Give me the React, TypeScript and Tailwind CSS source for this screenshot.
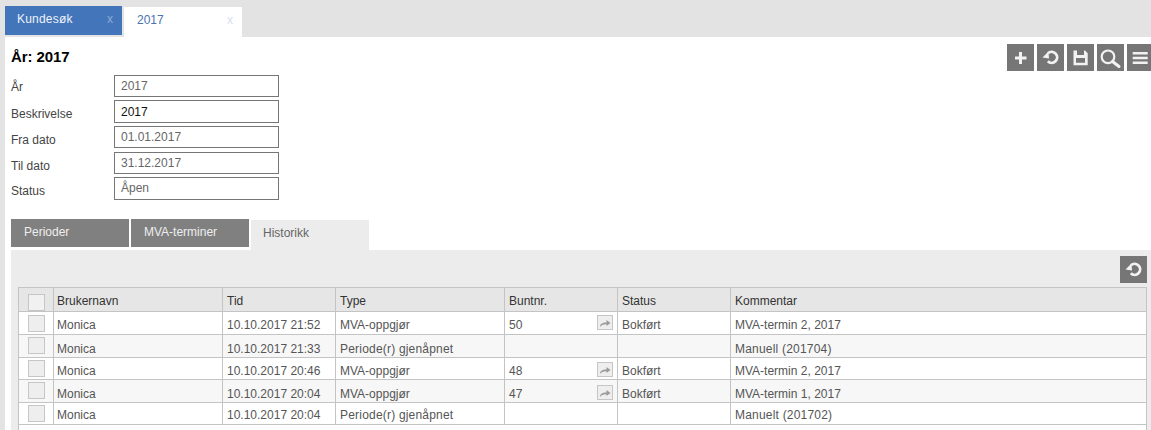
const fields = [
  { label: "År", value: "2017", h: "h-[22px]", mb: "mb-[3px]", labelPad: "pt-[2px]", valuePad: "pb-[1px]", dark: false },
  { label: "Beskrivelse", value: "2017", h: "h-[23px]", mb: "mb-[3px]", labelPad: "pt-[4px]", valuePad: "pb-0", dark: true },
  { label: "Fra dato", value: "01.01.2017", h: "h-[22px]", mb: "mb-[4px]", labelPad: "pt-[5px]", valuePad: "pb-0", dark: false },
  { label: "Til dato", value: "31.12.2017", h: "h-[22px]", mb: "mb-[3px]", labelPad: "pt-[5px]", valuePad: "pb-0", dark: false },
  { label: "Status", value: "Åpen", h: "h-[23px]", mb: "", labelPad: "pt-[4px]", valuePad: "pb-[1px]", dark: false },
];

const rows = [
  { tid: "10.10.2017 21:52", type: "MVA-oppgjør", bunt: "50", status: "Bokført", kommentar: "MVA-termin 2, 2017", h: "h-[23px]", bg: "bg-white", pad: "pt-[4px]", chk: "mt-[3px]", btn: "mt-[-1px]" },
  { tid: "10.10.2017 21:33", type: "Periode(r) gjenåpnet", bunt: "", status: "", kommentar: "Manuell (201704)", h: "h-[23px]", bg: "bg-[#f7f7f7]", pad: "pt-[5px]", chk: "mt-[2px]", btn: "" },
  { tid: "10.10.2017 20:46", type: "MVA-oppgjør", bunt: "48", status: "Bokført", kommentar: "MVA-termin 2, 2017", h: "h-[22px]", bg: "bg-white", pad: "pt-[4px]", chk: "mt-[2px]", btn: "mt-[1px]" },
  { tid: "10.10.2017 20:04", type: "MVA-oppgjør", bunt: "47", status: "Bokført", kommentar: "MVA-termin 1, 2017", h: "h-[23px]", bg: "bg-[#f7f7f7]", pad: "pt-[5px]", chk: "mt-[2px]", btn: "mt-[1px]" },
  { tid: "10.10.2017 20:04", type: "Periode(r) gjenåpnet", bunt: "", status: "", kommentar: "Manuelt (201702)", h: "h-[22px]", bg: "bg-white", pad: "pt-[3px]", chk: "mt-[2px]", btn: "" },
];

const cols = "grid grid-cols-[34px_169px_113px_169px_113px_113px_1fr]";

function IconButton({ children, narrow }: { children: React.ReactNode; narrow?: boolean }) {
  return (
    <div className={`h-[27px] shrink-0 overflow-hidden bg-[#767676] ${narrow ? "w-[24px]" : "w-[27px]"}`}>
      <svg width="27" height="27" viewBox="0 0 27 27" fill="#f2f2f2">
        {children}
      </svg>
    </div>
  );
}

function RefreshIcon() {
  return (
    <>
      <path d="M11 9.200A5.500 5.500 0 1 1 10.800 17.300" fill="none" stroke="#f2f2f2" strokeWidth="2.800" />
      <path d="M5.500 13.400 11.500 7.500 12 14.500Z" />
    </>
  );
}

function Cell({ children, first, className = "" }: { children?: React.ReactNode; first?: boolean; className?: string }) {
  return (
    <div className={`flex h-full items-center border-l border-[#c4c4c4] ${first ? "pl-[3px]" : "pl-[4px]"} ${className}`}>
      {children}
    </div>
  );
}

function Check({ className = "" }: { className?: string }) {
  return (
    <div className="pl-[9px]">
      <div className={`h-[17px] w-[17px] border border-[#c6c6c6] bg-[#eeeeee] ${className}`} />
    </div>
  );
}

export default function App() {
  return (
    <div className="h-[430px] w-[1151px] overflow-hidden bg-[#e3e3e3] font-['Liberation_Sans',Arial,sans-serif] text-[12px] text-[#555]">
      <div className="flex h-[37px] items-start gap-[2px] pl-[5px] pt-[6px]">
        <div className="flex h-[29px] w-[117px] items-center justify-between bg-[#4375bb] pb-[3px] pl-[12px] pr-[9px] text-[#eef2f9]">
          <span className="tracking-[0.2px]">Kundesøk</span>
          <span className="text-[#8fabd6]">x</span>
        </div>
        <div className="mt-px flex h-[30px] w-[118px] items-center justify-between bg-white pb-[5px] pl-[13px] pr-[9px] text-[#4a74b0]">
          <span>2017</span>
          <span className="text-[#d5deee]">x</span>
        </div>
      </div>

      <div className="ml-[5px] h-[393px] bg-white">
        <div className="flex h-[38px] justify-between pl-[6px] pt-[7px]">
          <h1 className="pt-[5px] text-[15px] leading-[16px] font-bold tracking-[-0.1px] text-black">År: 2017</h1>
          <div className="flex gap-[3px]">
            <IconButton>
              <path d="M12 8h3v4.500h4.500v3H15V20h-3v-4.500H8v-3h4Z" />
            </IconButton>
            <IconButton>
              <RefreshIcon />
            </IconButton>
            <IconButton>
              <path
                fillRule="evenodd"
                d="M6.500 6.500H18L20.700 9.200V21.200H6.500ZM10 6.500V11H17V6.500ZM9 14V18.800H18V14Z"
              />
            </IconButton>
            <IconButton>
              <circle cx="11" cy="12.800" r="6.300" fill="none" stroke="#f2f2f2" strokeWidth="2.200" />
              <path d="M15.500 17.500 22 22.500" fill="none" stroke="#f2f2f2" strokeWidth="3" strokeLinecap="round" />
            </IconButton>
            <IconButton narrow>
              <path d="M5.700 8h15v2.500h-15ZM5.700 12.700h15v2.500h-15ZM5.700 17.400h15v2.500h-15Z" />
            </IconButton>
          </div>
        </div>

        <div className="flex flex-col pl-[6px]">
          {fields.map((f) => (
            <div key={f.label} className={`flex items-center ${f.h} ${f.mb}`}>
              <span className={`w-[103px] text-[#444] ${f.labelPad}`}>{f.label}</span>
              <div
                className={`flex h-full w-[165px] items-center border border-[#767676] pl-[6px] ${f.valuePad} ${f.dark ? "text-[#111]" : "text-[#666]"}`}
              >
                {f.value}
              </div>
            </div>
          ))}
        </div>

        <div className="mt-[19px] flex h-[31px] items-start gap-[2px] pl-[6px]">
          <div className="flex h-[28px] w-[118px] items-center bg-[#808080] pb-[3px] pl-[13px] text-[#eeeeee]">Perioder</div>
          <div className="flex h-[28px] w-[118px] items-center bg-[#808080] pb-[3px] pl-[13px] text-[#eeeeee]">MVA-terminer</div>
          <div className="mt-px flex h-[30px] w-[118px] items-center bg-[#ececec] pb-[5px] pl-[12px] text-[#666]">Historikk</div>
        </div>

        <div className="ml-[6px] h-[180px] overflow-hidden bg-[#ececec] pt-[6px] pl-[7px]">
          <div className="flex justify-end pr-[4px]">
            <IconButton>
              <RefreshIcon />
            </IconButton>
          </div>
          <div className="mt-[4px] mr-[4px] h-[160px] border border-[#c4c4c4] bg-white">
            <div className={`${cols} h-[24px] border-b border-[#c4c4c4] bg-[#e6e6e6] text-[#333]`}>
              <Check className="mt-[6px] bg-[#f1f1f1]" />
              <Cell first className="pt-[2px]">Brukernavn</Cell>
              <Cell className="pt-[2px]">Tid</Cell>
              <Cell className="pt-[2px]">Type</Cell>
              <Cell className="pt-[2px]">Buntnr.</Cell>
              <Cell className="pt-[2px]">Status</Cell>
              <Cell className="pt-[2px]">Kommentar</Cell>
            </div>
            {rows.map((r, i) => (
              <div key={i} className={`${cols} ${r.h} border-b border-[#c4c4c4] ${r.bg}`}>
                <Check className={r.chk} />
                <Cell first className={r.pad}>Monica</Cell>
                <Cell className={r.pad}>{r.tid}</Cell>
                <Cell className={r.pad}>
                  <span className={r.bunt ? "" : "tracking-[0.2px]"}>{r.type}</span>
                </Cell>
                <Cell className={r.pad}>
                  <span className="flex-1">{r.bunt}</span>
                  {r.bunt && (
                    <div className={`mr-[4px] -translate-y-[2px] grid h-[15px] w-[16px] place-items-center border border-[#c6c6c6] bg-[#eeeeee] ${r.btn}`}>
                      <svg width="12" height="8" viewBox="0 0 12 8" className="text-[#9a9a9a]">
                        <path fill="currentColor" d="M1 8C1 5 3 3.500 7.500 3.500V1L11.500 4 7.500 7V5.200C4.500 5 2.500 6 1 8Z" />
                      </svg>
                    </div>
                  )}
                </Cell>
                <Cell className={r.pad}>{r.status}</Cell>
                <Cell className={r.pad}>
                  <span className={r.bunt ? "" : "tracking-[0.2px]"}>{r.kommentar}</span>
                </Cell>
              </div>
            ))}
          </div>
        </div>
      </div>
    </div>
  );
}
